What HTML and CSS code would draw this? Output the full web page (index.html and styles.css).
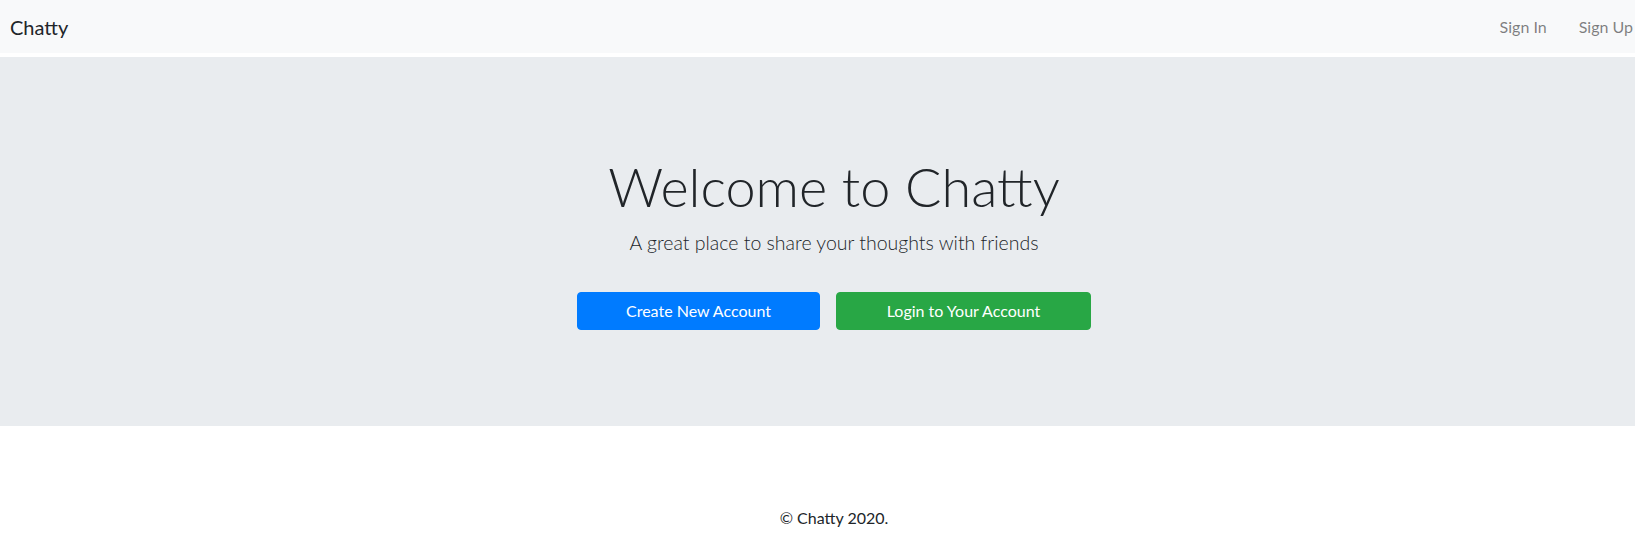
FILE: index.html
```html
<!DOCTYPE html>
<html lang="en">
<head>
<meta charset="utf-8">
<title>Chatty</title>
<link rel="stylesheet" href="styles.css">
</head>
<body>
<div class="page">
  <header class="navbar">
    <a class="brand" href="#">Chatty</a>
    <nav class="nav">
      <a class="nav-link" href="#">Sign In</a>
      <a class="nav-link" href="#">Sign Up</a>
    </nav>
  </header>
  <section class="jumbotron">
    <div class="container">
      <h1 class="display">Welcome to Chatty</h1>
      <p class="lead">A great place to share your thoughts with friends</p>
      <div class="actions">
        <a class="btn btn-primary" href="#">Create New Account</a>
        <a class="btn btn-success" href="#">Login to Your Account</a>
      </div>
    </div>
  </section>
  <footer class="footer">
    <p>&copy; Chatty 2020.</p>
  </footer>
</div>
</body>
</html>
```
FILE: styles.css
```css
html, body {
  margin: 0;
  padding: 0;
  overflow: hidden;
  background: #fff;
}
body {
  font-family: Lato, "Open Sans", "Liberation Sans", sans-serif;
  font-size: 16px;
  line-height: 1.5;
  color: #212529;
}
.page {
  width: 1668px;
}
a { text-decoration: none; }

.navbar {
  height: 53px;
  background: #f8f9fa;
  display: flex;
  align-items: center;
  justify-content: space-between;
  padding: 0 19px 0 10px;
  box-sizing: border-box;
}
.brand {
  font-size: 20px;
  line-height: 30px;
  color: #212529;
}
.nav {
  display: flex;
}
.nav-link {
  color: rgba(0, 0, 0, 0.5);
  padding: 0 16px;
  line-height: 24px;
}

.jumbotron {
  margin-top: 4px;
  background: #e9ecef;
  height: 369px;
  box-sizing: border-box;
  padding: 96px 32px;
}
.container {
  text-align: center;
}
.display {
  font-size: 54px;
  font-weight: 300;
  line-height: 67px;
  margin: 0 0 8px;
}
.lead {
  font-size: 19.5px;
  font-weight: 300;
  line-height: 30px;
  margin: 0 0 34px;
}
.actions {
  display: flex;
  justify-content: center;
  gap: 16px;
}
.btn {
  display: block;
  box-sizing: border-box;
  height: 38px;
  line-height: 24px;
  padding: 6px 0;
  border: 1px solid transparent;
  border-radius: 4px;
  color: #fff;
  text-align: center;
  font-size: 16px;
}
.btn-primary {
  width: 243px;
  background: #007bff;
  border-color: #007bff;
}
.btn-success {
  width: 255px;
  background: #28a745;
  border-color: #28a745;
}

.footer {
  text-align: center;
  padding-top: 80px;
}
.footer p {
  margin: 0;
}
```
